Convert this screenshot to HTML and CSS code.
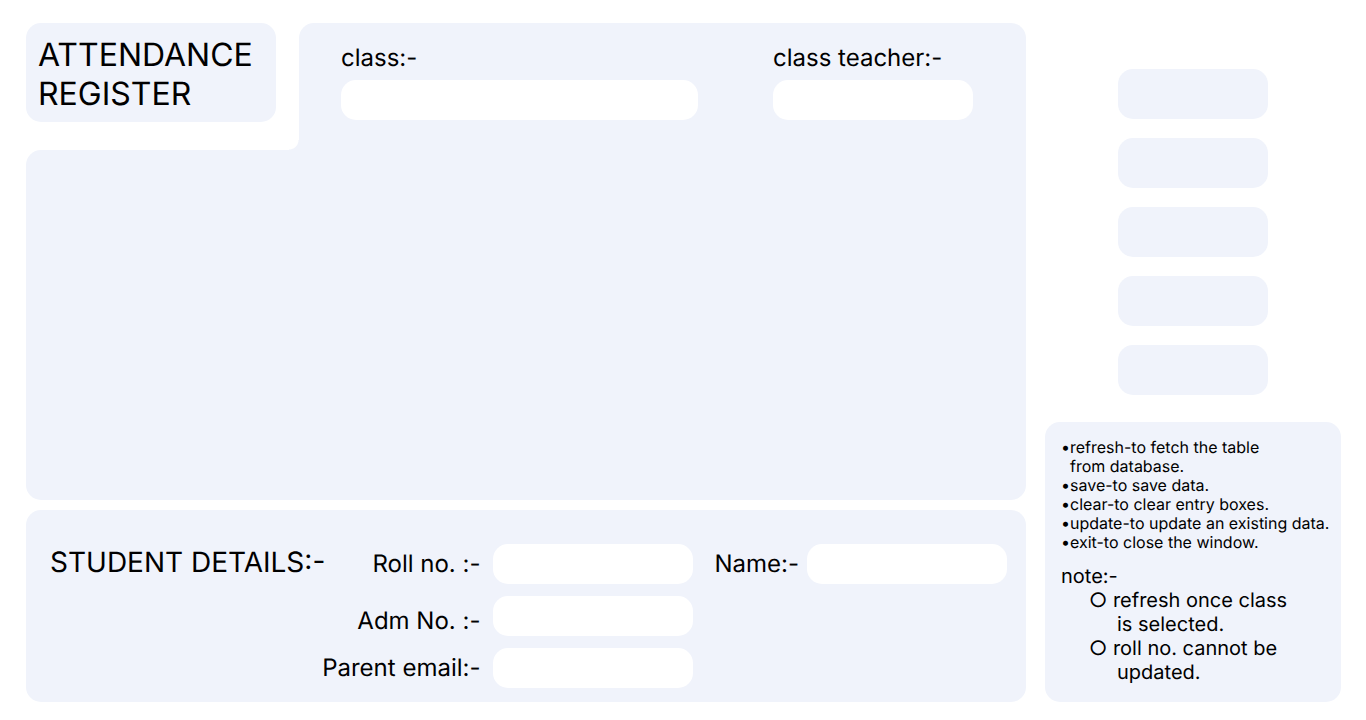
FILE: index.html
```html
<!DOCTYPE html>
<html lang="en">
<head>
<meta charset="utf-8">
<meta name="viewport" content="width=device-width, initial-scale=1">
<title>Attendance Register</title>
<link rel="stylesheet" href="styles.css">
</head>
<body>
<div class="page">
  <main class="main">
    <section class="register">
      <header class="register-head">
        <div class="corner">
          <h1 class="title">ATTENDANCE<br>REGISTER</h1>
        </div>
        <div class="class-bar">
          <div class="stacked class-field">
            <label class="label" for="class">class:-</label>
            <input class="box" id="class" type="text">
          </div>
          <div class="stacked teacher-field">
            <label class="label" for="teacher">class teacher:-</label>
            <input class="box" id="teacher" type="text">
          </div>
        </div>
      </header>
      <div class="sheet"></div>
    </section>
    <section class="details">
      <h2 class="subtitle">STUDENT DETAILS:-</h2>
      <label class="label first" for="roll">Roll no. :-</label>
      <input class="box" id="roll" type="text">
      <label class="label name" for="name">Name:-</label>
      <input class="box" id="name" type="text">
      <label class="label first low" for="adm">Adm No. :-</label>
      <input class="box" id="adm" type="text">
      <label class="label first" for="email">Parent email:-</label>
      <input class="box" id="email" type="email">
    </section>
  </main>
  <aside class="side">
    <div class="actions">
      <button class="action" type="button" aria-label="refresh"></button>
      <button class="action" type="button" aria-label="save"></button>
      <button class="action" type="button" aria-label="clear"></button>
      <button class="action" type="button" aria-label="update"></button>
      <button class="action" type="button" aria-label="exit"></button>
    </div>
    <section class="help">
      <ul class="help-list">
        <li>•refresh-to fetch the table<br>from database.</li>
        <li>•save-to save data.</li>
        <li>•clear-to clear entry boxes.</li>
        <li>•update-to update an existing data.</li>
        <li>•exit-to close the window.</li>
      </ul>
      <div class="note">
        <p class="note-title">note:-</p>
        <ul class="note-list">
          <li>○ refresh once class<br>is selected.</li>
          <li>○ roll no. cannot be<br>updated.</li>
        </ul>
      </div>
    </section>
  </aside>
</div>
</body>
</html>
```
FILE: styles.css
```css
:root {
  --panel: #f0f3fb;
  --radius: 15px;
}

* {
  box-sizing: border-box;
}

body,
h1,
h2,
p,
ul {
  margin: 0;
  padding: 0;
  font-weight: 400;
}

body {
  background: #fff;
  color: #000;
  font-family: Inter, "Liberation Sans", sans-serif;
  text-rendering: geometricPrecision;
}

ul {
  list-style: none;
}

.page {
  display: grid;
  grid-template-columns: minmax(0, 1fr) 296px;
  gap: 19px;
  min-height: 100vh;
  padding: 23px 25px 18px 26px;
}

.main {
  display: flex;
  flex-direction: column;
  gap: 10px;
}

.register {
  display: flex;
  flex: 1;
  flex-direction: column;
}

.register-head {
  display: flex;
}

/* The gradient fills the outside of the rounded inner corner. */
.corner {
  padding: 0 23px 28px 0;
  background: radial-gradient(circle at 0 0, transparent 9px, var(--panel) 10px) right bottom / 10px 10px no-repeat;
}

.title {
  width: 250px;
  padding: 12px 12px 9px;
  border-radius: var(--radius);
  background: var(--panel);
  font-size: 32px;
  line-height: 39px;
}

.class-bar {
  display: flex;
  flex: 1;
  align-items: flex-start;
  justify-content: space-between;
  gap: 40px;
  padding: 20px 53px 0 42px;
  border-radius: var(--radius) var(--radius) 0 0;
  background: var(--panel);
}

.stacked {
  display: flex;
  flex-direction: column;
  gap: 8px;
}

.class-field {
  flex: 0 1 357px;
}

.teacher-field {
  flex: 0 1 200px;
}

.sheet {
  flex: 1;
  border-radius: var(--radius) 0 var(--radius) var(--radius);
  background: var(--panel);
}

.label {
  font-size: 24px;
  line-height: 29px;
  white-space: nowrap;
}

.box {
  width: 100%;
  height: 40px;
  padding: 0 12px;
  border: 0;
  border-radius: var(--radius);
  background: #fff;
  color: inherit;
  font: inherit;
  font-size: 20px;
}

.details {
  display: grid;
  grid-template-columns: 272px 1fr 200px auto 200px;
  row-gap: 12px;
  align-items: center;
  padding: 34px 19px 14px 24px;
  border-radius: var(--radius);
  background: var(--panel);
}

.details .label {
  padding-bottom: 2px;
}

.subtitle {
  padding-bottom: 4px;
  font-size: 28px;
  line-height: 34px;
  white-space: nowrap;
}

.first {
  grid-column: 2;
  justify-self: end;
  margin-right: 13px;
}

.details .low {
  align-self: end;
  padding-bottom: 1px;
}

.name {
  margin: 0 8px 0 21px;
}

.side {
  display: flex;
  flex-direction: column;
  gap: 27px;
  padding-top: 46px;
}

.actions {
  display: flex;
  flex-direction: column;
  align-items: center;
  gap: 19px;
}

.action {
  width: 150px;
  height: 50px;
  border: 0;
  border-radius: var(--radius);
  background: var(--panel);
}

.help {
  display: flex;
  flex: 1;
  flex-direction: column;
  gap: 12px;
  padding: 16px 8px 16px 16px;
  border-radius: var(--radius);
  background: var(--panel);
}

.help-list {
  padding-left: 9px;
  font-size: 16px;
  line-height: 19px;
}

.help-list li {
  text-indent: -9px;
}

.note {
  font-size: 20px;
  line-height: 24px;
}

.note-list {
  padding-left: 56px;
}

.note-list li {
  text-indent: -28px;
}
```
